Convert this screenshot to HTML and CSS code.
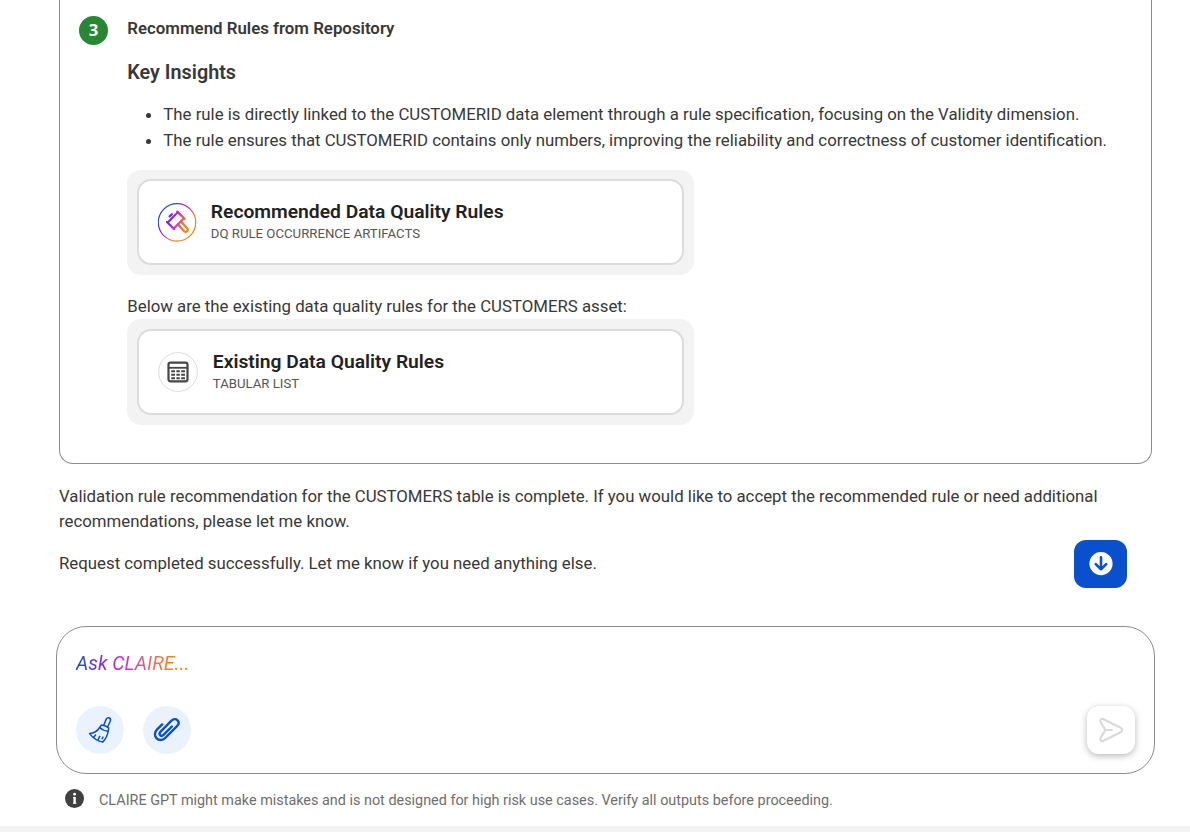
FILE: index.html
```html
<!DOCTYPE html>
<html lang="en">
<head>
<meta charset="utf-8">
<title>CLAIRE GPT</title>
<link rel="stylesheet" href="styles.css">
</head>
<body>
<main class="page">
  <section class="steps">
    <div class="step-number">3</div>
    <div class="step-body">
      <h2 class="step-title">Recommend Rules from Repository</h2>
      <h3 class="insights-title">Key Insights</h3>
      <ul class="insights">
        <li>The rule is directly linked to the CUSTOMERID data element through a rule specification, focusing on the Validity dimension.</li>
        <li>The rule ensures that CUSTOMERID contains only numbers, improving the reliability and correctness of customer identification.</li>
      </ul>
      <div class="card-frame">
        <div class="card">
          <svg class="rule-icon" width="40" height="40" viewBox="0 0 40 40" fill="none">
            <defs>
              <linearGradient id="ring" gradientUnits="userSpaceOnUse" x1="5" y1="8" x2="33" y2="33"><stop offset="0" stop-color="#0b50d0"/><stop offset=".42" stop-color="#a61df0"/><stop offset=".72" stop-color="#f47a30"/><stop offset="1" stop-color="#ff8200"/></linearGradient>
              <linearGradient id="hammer" gradientUnits="userSpaceOnUse" x1="8" y1="17" x2="30" y2="25"><stop offset="0" stop-color="#2450e0"/><stop offset=".25" stop-color="#a01af5"/><stop offset=".6" stop-color="#e0507c"/><stop offset=".85" stop-color="#ff8200"/></linearGradient>
            </defs>
            <circle cx="19" cy="20.4" r="18.7" stroke="url(#ring)" stroke-width="1.2"/>
            <g stroke="url(#hammer)" stroke-width="2.2" stroke-linecap="round" stroke-linejoin="round">
              <path d="M19.3 9.6l7.3 7.3M9 20l7.2 7.2M18.8 11.2l-8.1 8.3M25 17.3l-8.1 8.3"/>
              <path d="M11.6 14.4l2.3-2.2" stroke-width="2.2"/>
              <path d="M20 22.2l6.1 7c1.9 1.8 4.9-.8 3.1-2.9l-6.4-6.7"/>
            </g>
          </svg>
          <div class="card-text">
            <div class="card-title">Recommended Data Quality Rules</div>
            <div class="card-kind">DQ RULE OCCURRENCE ARTIFACTS</div>
          </div>
        </div>
      </div>
      <p class="card-intro">Below are the existing data quality rules for the CUSTOMERS asset:</p>
      <div class="card-frame card-frame-tall">
        <div class="card card-table">
          <svg class="table-icon" width="40" height="40" viewBox="0 0 40 40" fill="none">
            <circle cx="20" cy="20" r="19.4" stroke="#dcdcdc"/>
            <rect x="10.5" y="10.7" width="19" height="18.6" rx="2" stroke="#464646" stroke-width="2.2"/>
            <path d="M10.5 15.8h19" stroke="#464646" stroke-width="1.8"/>
            <path d="M13.2 19.3h3.8m1.4 0h3.4m1.4 0H27M13.2 22.8h3.8m1.4 0h3.4m1.4 0H27M13.2 26.3h3.8m1.4 0h3.4m1.4 0H27" stroke="#464646" stroke-width="2"/>
          </svg>
          <div class="card-text">
            <div class="card-title">Existing Data Quality Rules</div>
            <div class="card-kind">TABULAR LIST</div>
          </div>
        </div>
      </div>
    </div>
  </section>

  <div class="reply">
    <div class="reply-text">
      <p>Validation rule recommendation for the CUSTOMERS table is complete. If you would like to accept the recommended rule or need additional recommendations, please let me know.</p>
      <p>Request completed successfully. Let me know if you need anything else.</p>
    </div>
    <button class="scroll-down" aria-label="Scroll to bottom">
      <svg width="24" height="24" viewBox="0 0 24 24" fill="none"><circle cx="12" cy="11.6" r="11.6" fill="#fff"/><path d="M12 5.2v12M6.8 12.2l5.2 5.2 5.2-5.2" stroke="#0a4fcb" stroke-width="2.6" stroke-linecap="round" stroke-linejoin="round"/></svg>
    </button>
  </div>

  <section class="prompt">
    <div class="prompt-hint">Ask CLAIRE...</div>
    <div class="prompt-actions">
      <button class="round" aria-label="Clear">
        <svg width="48" height="48" viewBox="0 0 48 48" fill="none" stroke="#0a4fcb" stroke-width="1.5" stroke-linecap="round" stroke-linejoin="round">
          <path d="M27.8 19.2l2.3-5.8c.6-1.6 2.2-2 3.3-1.4s1.5 1.8.8 3.2l-2.5 5.6"/>
          <path d="M25.5 18.9c2.7.3 5.4 1.3 7.2 3.1l-.5 3.2c-2.6-.1-6.1-1.5-8.5-3.7z"/>
          <path d="M23.7 21.5c-2.5 3.8-5.8 5.6-10.1 6.1 3.5 4.6 8.1 7.6 13.3 8.4 2.8-3 4.6-6.6 5.3-10.8M17.5 31.5l2-2.4M22 33.8l1.7-3.4M26.2 32.6l.7-1.5"/>
        </svg>
      </button>
      <button class="round" aria-label="Attach file">
        <svg width="48" height="48" viewBox="0 0 48 48" fill="none" stroke="#0a4fcb" stroke-width="2.4" stroke-linecap="round" stroke-linejoin="round">
          <path d="M19.2 18.4l-5.3 5.3c-2.7 2.8-2.4 6.5-.3 8.6s5.9 2.4 8.6-.3L34 20.2c2-2 2-4.4.5-5.9s-4-1.6-6 .4L17.4 25.8c-1.2 1.2-1.2 2.5-.3 3.4s2.2.9 3.4-.3l8.4-8.4"/>
        </svg>
      </button>
      <button class="send" aria-label="Send">
        <svg width="48" height="48" viewBox="0 0 48 48" fill="none" stroke="#dadada" stroke-width="2.2" stroke-linecap="round" stroke-linejoin="round">
          <path d="M18.4 24l-4.8-7.9c-1-1.8.5-3.8 2.5-3.1l17.5 8.7c2 1 2 3.6 0 4.6L16.1 35c-2 .7-3.5-1.3-2.5-3.1zM18.4 24h6.4"/>
        </svg>
      </button>
    </div>
  </section>

  <div class="notice">
    <svg width="20" height="20" viewBox="0 0 20 20"><circle cx="9.5" cy="9.5" r="9.5" fill="#404040"/><path d="M9.6 8v6.6" stroke="#fff" stroke-width="2.4"/><path d="M8.2 8.4h1.6M8 14.2h3.4" stroke="#fff" stroke-width="1"/><circle cx="9.6" cy="5.2" r="1.4" fill="#fff"/></svg>
    <span>CLAIRE GPT might make mistakes and is not designed for high risk use cases. Verify all outputs before proceeding.</span>
  </div>
  <div class="bottom-strip"></div>
</main>
</body>
</html>
```
FILE: styles.css
```css
* { box-sizing: border-box; }
body {
  margin: 0;
  background: #fff;
  color: #383838;
  font: 16.81px/25.5px Roboto, sans-serif;
  overflow: hidden;
}
p, h2, h3, ul { margin: 0; padding: 0; }
button { border: 0; padding: 0; display: grid; place-items: center; }
svg { display: block; flex: none; }

.page { height: 832px; display: flex; flex-direction: column; }

.steps {
  flex: none;
  display: flex;
  height: 464px;
  width: 1093px;
  margin-left: 59px;
  padding: 16px 19px 0;
  border: 1px solid #8c8c8c;
  border-top: 0;
  border-radius: 0 0 14px 14px;
}
.step-number {
  flex: none;
  width: 29px;
  height: 29px;
  margin-right: 19.3px;
  border-radius: 50%;
  background: #278732;
  color: #fff;
  font-family: "Open Sans", sans-serif;
  font-weight: 700;
  line-height: 28px;
  text-align: center;
}
.step-body { flex: 1; min-width: 0; }
.step-title { font-size: 16.83px; line-height: 24px; font-weight: 600; }
.insights-title { margin-top: 19px; font-size: 19.8px; line-height: 28px; font-weight: 600; }
.insights { margin-top: 15px; padding-left: 36px; white-space: nowrap; }

.card-frame {
  width: 567px;
  height: 105px;
  margin-top: 17px;
  padding: 9px 10px;
  border-radius: 14px;
  background: #f3f3f3;
}
.card-frame-tall { height: 106px; margin-top: 0; padding-top: 10px; }
.card {
  display: flex;
  height: 86px;
  padding: 19px 19px 0;
  border: 2px solid #dcdcdc;
  border-radius: 14px;
  background: #fff;
}
.rule-icon { margin: 2px 12.5px 0 0; }
.table-icon { margin: 1.5px 14.5px 0 0; }
.card-title { color: #222; font-size: 19.25px; line-height: 24px; font-weight: 600; }
.card-kind { color: #555; font-size: 13.2px; line-height: 20px; }
.card-intro { margin-top: 18px; line-height: 26px; }

.reply { flex: none; display: flex; justify-content: space-between; padding: 19.5px 63px 0 59px; }
.reply-text { width: 1050px; margin-right: -35px; }
.reply-text p + p { margin-top: 16.5px; }
.scroll-down {
  flex: none;
  width: 53px;
  height: 48px;
  margin-top: 56.5px;
  border-radius: 12px;
  background: #0a4fcb;
}

.prompt {
  flex: none;
  width: 1099px;
  height: 148px;
  margin: 38px 0 0 56px;
  padding: 23px 19px 0;
  border: 1px solid #8c8c8c;
  border-radius: 30px;
}
.prompt-hint {
  width: 114px;
  color: transparent;
  background: linear-gradient(90deg, #0b50d0, #a61df0 29%, #cf35bb 45%, #f07350 70%, #ff8200 88%);
  -webkit-background-clip: text;
  background-clip: text;
  font-size: 19.4px;
  font-style: italic;
  line-height: 28px;
}
.prompt-actions { display: flex; gap: 19px; margin-top: 28px; }
.round { width: 48px; height: 48px; border-radius: 50%; background: #ebf2ff; }
.send {
  width: 48px;
  height: 48px;
  margin-left: auto;
  border-radius: 12px;
  background: #fff;
  box-shadow: 0 2px 7px rgba(0, 0, 0, .28);
}

.notice {
  flex: none;
  display: flex;
  align-items: flex-start;
  gap: 14px;
  height: 52px;
  padding: 15px 0 0 65px;
  color: #6e6e6e;
  font-size: 14.4px;
  line-height: 24px;
}
.bottom-strip { height: 6px; background: #f3f3f3; }
```
